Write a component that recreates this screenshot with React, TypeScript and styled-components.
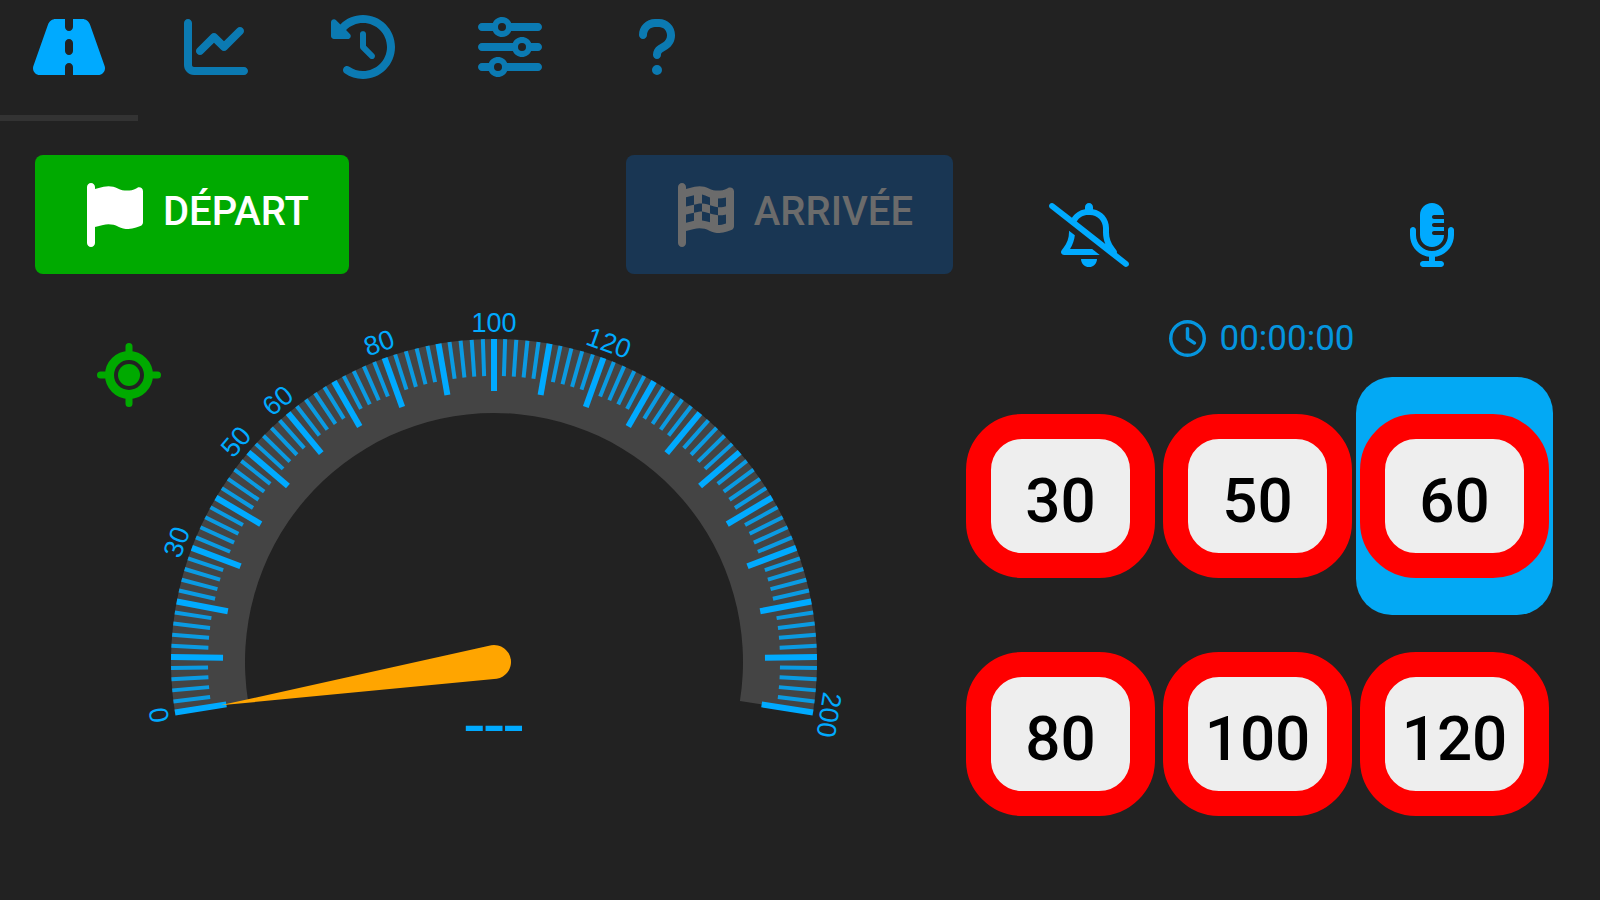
import React, { useState } from "react";
import styled, { createGlobalStyle } from "styled-components";
import {
  FaRoad,
  FaChartLine,
  FaClockRotateLeft,
  FaSliders,
  FaQuestion,
  FaFlag,
  FaFlagCheckered,
  FaRegBellSlash,
  FaMicrophoneLines,
  FaRegClock,
} from "react-icons/fa6";

const colors = {
  background: "#222222",
  accent: "#03a9f4",
  tick: "#00aaff",
  start: "#00aa00",
  finish: "#193653",
  finishText: "#6b6b6b",
  band: "#444444",
  needle: "#ffa500",
  sign: "#ff0000",
  signFace: "#eeeeee",
};

const GlobalStyle = createGlobalStyle`
  *, *::before, *::after { box-sizing: border-box; }
  body {
    margin: 0;
    background: ${colors.background};
    font-family: Roboto, "Liberation Sans", sans-serif;
  }
  button { font-family: inherit; cursor: pointer; }
`;

const Page = styled.div`
  min-height: 100vh;
  background: ${colors.background};
`;

const TabBar = styled.nav`
  display: flex;
  gap: 9px;
`;

const Tab = styled.button<{ $active: boolean; $iconWidth: number }>`
  display: flex;
  justify-content: center;
  width: 138px;
  height: 121px;
  padding: 15px 0 0;
  border: 0;
  border-bottom: 6px solid ${(p) => (p.$active ? "#333333" : "transparent")};
  background: none;
  color: ${colors.tick};

  svg {
    flex: none;
    width: ${(p) => p.$iconWidth}px;
    height: 64px;
    opacity: ${(p) => (p.$active ? 1 : 0.65)};
  }
`;

const Main = styled.main`
  display: grid;
  grid-template-columns: 918fr 591fr;
  gap: 9px;
  padding: 0 47px 0 35px;
`;

const DrivePanel = styled.section`
  display: flex;
  flex-direction: column;
  gap: 16px;
  padding-top: 34px;
`;

const RunButtons = styled.div`
  display: flex;
  justify-content: space-between;
`;

const RunButton = styled.button<{ $finish?: boolean }>`
  display: flex;
  align-items: center;
  gap: 20px;
  height: 119px;
  padding: 0 40px 0 52px;
  border: 0;
  border-radius: 8px;
  background: ${(p) => (p.$finish ? colors.finish : colors.start)};
  color: ${(p) => (p.$finish ? colors.finishText : "#ffffff")};
  font-size: 40px;
  font-weight: 500;
  line-height: 48px;

  svg {
    width: 56px;
    height: 64px;
  }
`;

const RunLabel = styled.span`
  padding-bottom: 6px;
`;

const GaugeArea = styled.div`
  display: grid;

  > * {
    grid-area: 1 / 1;
  }
`;

const GpsStatus = styled.div`
  justify-self: start;
  margin: 53px 0 0 62px;
  color: ${colors.start};

  svg {
    display: block;
  }
`;

const Dial = styled.svg`
  justify-self: center;
  width: 720px;
  max-width: 100%;
`;

const DialLabel = styled.text`
  fill: ${colors.tick};
  font-family: "Liberation Sans", Arial, sans-serif;
  font-size: 27px;
  text-anchor: middle;
`;

const SpeedReadout = styled.text`
  fill: ${colors.tick};
  font-size: 71px;
  text-anchor: middle;
`;

const LimitPanel = styled.section`
  display: flex;
  flex-direction: column;
  padding-top: 49px;
`;

const AudioButtons = styled.div`
  display: flex;
  justify-content: space-between;
  padding: 0 56px 0 62px;
`;

const AudioButton = styled.button<{ $iconWidth: number }>`
  display: flex;
  align-items: center;
  justify-content: center;
  width: 130px;
  height: 130px;
  padding: 0;
  border: 0;
  background: none;
  color: ${colors.tick};

  svg {
    flex: none;
    width: ${(p) => p.$iconWidth}px;
    height: 64px;
  }
`;

const Timer = styled.div`
  display: flex;
  align-items: center;
  justify-content: center;
  gap: 14px;
  height: 77px;
  padding-left: 8px;
  color: ${colors.tick};
  font-size: 35px;
  line-height: 40px;
  opacity: 0.85;

  svg {
    width: 37px;
    height: 37px;
  }
`;

const SignGrid = styled.div`
  display: grid;
  grid-template-columns: repeat(3, 1fr);
`;

const SignCell = styled.button<{ $selected: boolean }>`
  display: flex;
  align-items: center;
  height: 238px;
  padding: 0 4px;
  border: 0;
  border-radius: 36px;
  background: ${(p) => (p.$selected ? colors.accent : "transparent")};
`;

const Sign = styled.span`
  display: flex;
  align-items: center;
  justify-content: center;
  width: 100%;
  height: 164px;
  padding-top: 10px;
  border: 25px solid ${colors.sign};
  border-radius: 56px;
  background: ${colors.signFace};
  color: #000000;
  font-size: 62px;
  font-weight: 500;
  line-height: 72px;
`;

const tabs = [
  { label: "Route", Icon: FaRoad, width: 72 },
  { label: "Graphique", Icon: FaChartLine, width: 64 },
  { label: "Historique", Icon: FaClockRotateLeft, width: 64 },
  { label: "Réglages", Icon: FaSliders, width: 64 },
  { label: "Aide", Icon: FaQuestion, width: 64 },
];

const limits = [30, 50, 60, 80, 100, 120];

const CX = 360;
const CY = 372;
const OUTER = 323;
const INNER = 249;
const MAX_ANGLE = 99;

const angleOf = (speed: number) => (speed / 100 - 1) * MAX_ANGLE;

const pointAt = (radius: number, degrees: number) => {
  const a = (degrees * Math.PI) / 180;
  return `${(CX + radius * Math.sin(a)).toFixed(2)} ${(CY - radius * Math.cos(a)).toFixed(2)}`;
};

const bandPath = [
  `M${pointAt(OUTER, -MAX_ANGLE)}`,
  `A${OUTER} ${OUTER} 0 1 1 ${pointAt(OUTER, MAX_ANGLE)}`,
  `L${pointAt(INNER, MAX_ANGLE)}`,
  `A${INNER} ${INNER} 0 1 0 ${pointAt(INNER, -MAX_ANGLE)}Z`,
].join("");

const tickSpeeds = Array.from({ length: 101 }, (_, i) => i * 2);
const labelSpeeds = [0, 30, 50, 60, 80, 100, 120, 200];

function Speedometer({ speed }: { speed: number | null }) {
  return (
    <Dial viewBox="0 0 720 500" role="img" aria-label="Compteur de vitesse">
      <path d={bandPath} fill={colors.band} />
      {tickSpeeds.map((s) => {
        const major = s % 10 === 0;
        return (
          <line
            key={s}
            x1={CX}
            x2={CX}
            y1={CY - OUTER}
            y2={CY - OUTER + (major ? 52 : 37)}
            stroke={colors.tick}
            strokeOpacity={major ? 1 : 0.85}
            strokeWidth={major ? 6 : 4}
            transform={`rotate(${angleOf(s)} ${CX} ${CY})`}
          />
        );
      })}
      {labelSpeeds.map((s) => (
        <DialLabel key={s} x={CX} y={CY - OUTER - 7} transform={`rotate(${angleOf(s)} ${CX} ${CY})`}>
          {s}
        </DialLabel>
      ))}
      <path
        d={`M${CX - 17} ${CY}L${CX} ${CY - 277}L${CX + 17} ${CY}A17 17 0 0 1 ${CX - 17} ${CY}Z`}
        fill={colors.needle}
        transform={`rotate(${angleOf(speed ?? 0)} ${CX} ${CY})`}
      />
      <SpeedReadout x={CX} y={460}>
        {speed ?? "---"}
      </SpeedReadout>
    </Dial>
  );
}

function GpsIcon() {
  return (
    <svg width="64" height="64" viewBox="0 0 64 64" role="img" aria-label="Signal GPS">
      <circle cx="32" cy="32" r="11" fill="currentColor" />
      <circle cx="32" cy="32" r="19.5" fill="none" stroke="currentColor" strokeWidth="9" />
      <path
        d="M32 3.5V11M32 53V60.5M3.5 32H11M53 32H60.5"
        stroke="currentColor"
        strokeWidth="7"
        strokeLinecap="round"
      />
    </svg>
  );
}

export default function App() {
  const [tab, setTab] = useState(0);
  const [limit, setLimit] = useState(60);

  return (
    <>
      <GlobalStyle />
      <Page>
        <TabBar>
          {tabs.map(({ label, Icon, width }, i) => (
            <Tab
              key={label}
              $active={i === tab}
              $iconWidth={width}
              aria-label={label}
              onClick={() => setTab(i)}
            >
              <Icon />
            </Tab>
          ))}
        </TabBar>
        <Main>
          <DrivePanel>
            <RunButtons>
              <RunButton>
                <FaFlag />
                <RunLabel>DÉPART</RunLabel>
              </RunButton>
              <RunButton $finish disabled>
                <FaFlagCheckered />
                <RunLabel>ARRIVÉE</RunLabel>
              </RunButton>
            </RunButtons>
            <GaugeArea>
              <Speedometer speed={null} />
              <GpsStatus>
                <GpsIcon />
              </GpsStatus>
            </GaugeArea>
          </DrivePanel>
          <LimitPanel>
            <AudioButtons>
              <AudioButton $iconWidth={80} aria-label="Alertes sonores">
                <FaRegBellSlash />
              </AudioButton>
              <AudioButton $iconWidth={48} aria-label="Commande vocale">
                <FaMicrophoneLines />
              </AudioButton>
            </AudioButtons>
            <Timer>
              <FaRegClock />
              <span>00:00:00</span>
            </Timer>
            <SignGrid>
              {limits.map((value) => (
                <SignCell
                  key={value}
                  $selected={value === limit}
                  aria-pressed={value === limit}
                  onClick={() => setLimit(value)}
                >
                  <Sign>{value}</Sign>
                </SignCell>
              ))}
            </SignGrid>
          </LimitPanel>
        </Main>
      </Page>
    </>
  );
}
